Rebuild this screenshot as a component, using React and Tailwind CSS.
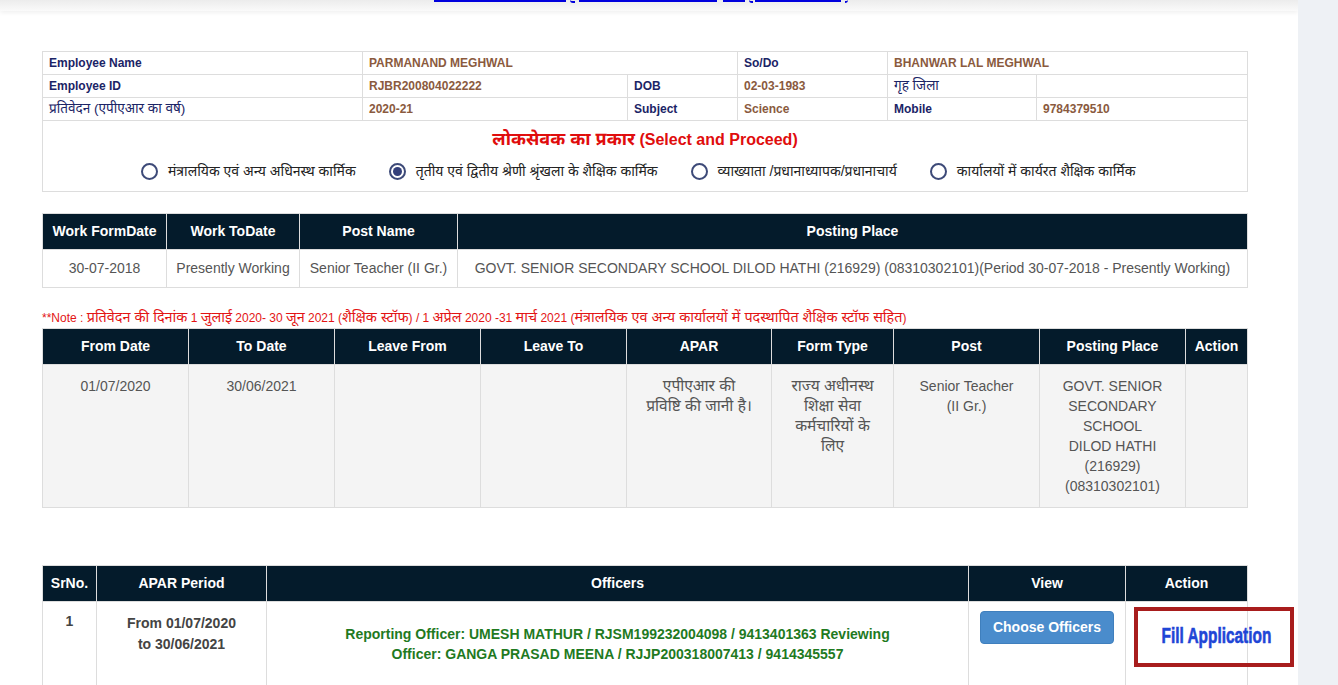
import React, { useState } from "react";

const FONT = { fontFamily: '"Liberation Sans", Arial, "Noto Sans Devanagari", "Lohit Devanagari", "Noto Sans", sans-serif' };

// devanagari fallback runs a bit small, bump it
const Hi = ({ children, big }) => <span className={big ? "text-[1.2em]" : "text-[1.13em]"}>{children}</span>;

const Label = ({ children, className = "" }) => (
  <td className={`border border-[#dddddd] px-[6px] h-[23px] text-[12px] font-bold text-[#1b2466] ${className}`}>{children}</td>
);
const Value = ({ children, colSpan, className = "" }) => (
  <td colSpan={colSpan} className={`border border-[#dddddd] px-[6px] h-[23px] text-[12px] font-bold text-[#8a5a3e] ${className}`}>{children}</td>
);

const Th = ({ children, w }) => (
  <th className={`${w} h-[36px] border-x border-[#dddddd] bg-[#041b2b] text-white text-[14px] font-bold text-center align-middle`}>
    {children}
  </th>
);

const Radio = ({ checked, label, onClick }) => (
  <label className="flex items-center gap-[10px] cursor-pointer" onClick={onClick}>
    <span className="w-[17px] h-[17px] rounded-full border-2 border-[#3d4a78] flex items-center justify-center bg-white">
      {checked ? <span className="w-[9px] h-[9px] rounded-full bg-[#34407a]" /> : null}
    </span>
    <span className="text-[14px] text-[#222]">{label}</span>
  </label>
);

export default function App() {
  const [kind, setKind] = useState(1);
  const kinds = [
    "मंत्रालयिक एवं अन्य अधिनस्थ कार्मिक",
    "तृतीय एवं द्वितीय श्रेणी श्रृंखला के शैक्षिक कार्मिक",
    "व्याख्याता /प्रधानाध्यापक/प्रधानाचार्य",
    "कार्यालयों में कार्यरत शैक्षिक कार्मिक",
  ];

  return (
    <div className="flex w-[1338px] h-[685px] overflow-hidden bg-white" style={FONT}>
      <div className="w-[1298px] shrink-0">
        {/* top strip, link mostly scrolled out */}
        <div className="h-[11px] bg-gradient-to-b from-[#ececec] to-[#fafafa] shadow-[0_2px_4px_rgba(0,0,0,0.06)]">
          <div className="flex items-start ml-[434px] h-[4px] overflow-hidden">
            <span className="w-[132px] h-[2px] bg-[#0000dd]" />
            <span className="ml-[4px] w-[5px] h-[3px] border-b-2 border-[#0000dd] rounded-bl-full" />
            <span className="ml-[4px] w-[138px] h-[2px] bg-[#0000dd]" />
            <span className="ml-[6px] w-[22px] h-[2px] bg-[#0000dd]" />
            <span className="ml-[4px] w-[4px] h-[3px] border-b-2 border-[#0000dd] rounded-bl-full" />
            <span className="ml-[2px] w-[86px] h-[2px] bg-[#0000dd]" />
            <span className="ml-[4px] w-[3px] h-[3px] border-b-2 border-[#0000dd] rounded-br-full" />
          </div>
        </div>

        <div className="pl-[42px] pt-[40px] w-[1247px]">
          {/* employee details */}
          <table className="w-[1205px] border-collapse table-fixed">
            <colgroup>
              <col className="w-[320px]" />
              <col className="w-[265px]" />
              <col className="w-[110px]" />
              <col className="w-[150px]" />
              <col className="w-[149px]" />
              <col className="w-[211px]" />
            </colgroup>
            <tbody>
              <tr>
                <Label>Employee Name</Label>
                <Value colSpan={2}>PARMANAND MEGHWAL</Value>
                <Label>So/Do</Label>
                <Value colSpan={2}>BHANWAR LAL MEGHWAL</Value>
              </tr>
              <tr>
                <Label>Employee ID</Label>
                <Value>RJBR200804022222</Value>
                <Label>DOB</Label>
                <Value>02-03-1983</Value>
                <Label className="!font-normal"><Hi>गृह जिला</Hi></Label>
                <Value></Value>
              </tr>
              <tr>
                <Label className="!font-normal"><Hi>प्रतिवेदन (एपीएआर का वर्ष)</Hi></Label>
                <Value>2020-21</Value>
                <Label>Subject</Label>
                <Value>Science</Value>
                <Label>Mobile</Label>
                <Value>9784379510</Value>
              </tr>
              <tr>
                <td colSpan={6} className="border border-[#dddddd] h-[71px] align-top">
                  <div className="text-center text-[#e00d0d] text-[16px] font-bold pt-[7px] leading-[22px]">
                    <Hi>लोकसेवक का प्रकार</Hi> (Select and Proceed)
                  </div>
                  <div className="flex gap-[33px] mt-[10px] pl-[98px]">
                    {kinds.map((k, i) => (
                      <Radio key={i} checked={kind === i} label={k} onClick={() => setKind(i)} />
                    ))}
                  </div>
                </td>
              </tr>
            </tbody>
          </table>

          {/* work history */}
          <table className="w-[1205px] border-collapse table-fixed mt-[21px] border border-[#dddddd]">
            <thead>
              <tr>
                <Th w="w-[124px]">Work FormDate</Th>
                <Th w="w-[133px]">Work ToDate</Th>
                <Th w="w-[158px]">Post Name</Th>
                <Th w="w-[790px]">Posting Place</Th>
              </tr>
            </thead>
            <tbody>
              <tr className="text-[14px] text-[#555] text-center">
                <td className="border border-[#dddddd] h-[38px]">30-07-2018</td>
                <td className="border border-[#dddddd]">Presently Working</td>
                <td className="border border-[#dddddd]">Senior Teacher (II Gr.)</td>
                <td className="border border-[#dddddd]">
                  GOVT. SENIOR SECONDARY SCHOOL DILOD HATHI (216929) (08310302101)(Period 30-07-2018 - Presently Working)
                </td>
              </tr>
            </tbody>
          </table>

          <p className="mt-[20px] text-[12px] leading-[18px] text-[#e31414] whitespace-nowrap">
            **Note : <Hi big>प्रतिवेदन की दिनांक</Hi> 1 <Hi big>जुलाई</Hi> 2020- 30 <Hi big>जून</Hi> 2021 (<Hi big>शैक्षिक स्टॉफ</Hi>) / 1 <Hi big>अप्रेल</Hi> 2020 -31 <Hi big>मार्च</Hi> 2021 (<Hi big>मंत्रालयिक एव अन्य कार्यालयों में पदस्थापित शैक्षिक स्टॉफ सहित</Hi>)
          </p>

          {/* apar table */}
          <table className="w-[1205px] border-collapse table-fixed mt-[1px] border border-[#dddddd]">
            <thead>
              <tr>
                <Th w="w-[146px]">From Date</Th>
                <Th w="w-[146px]">To Date</Th>
                <Th w="w-[146px]">Leave From</Th>
                <Th w="w-[146px]">Leave To</Th>
                <Th w="w-[145px]">APAR</Th>
                <Th w="w-[122px]">Form Type</Th>
                <Th w="w-[146px]">Post</Th>
                <Th w="w-[146px]">Posting Place</Th>
                <Th w="w-[62px]">Action</Th>
              </tr>
            </thead>
            <tbody>
              <tr className="bg-[#f4f4f4] text-[14px] leading-[20px] text-[#555] text-center align-top">
                <td className="border border-[#dddddd] h-[143px] pt-[11px]">01/07/2020</td>
                <td className="border border-[#dddddd] pt-[11px]">30/06/2021</td>
                <td className="border border-[#dddddd]"></td>
                <td className="border border-[#dddddd]"></td>
                <td className="border border-[#dddddd] pt-[11px] text-[15.5px]">
                  एपीएआर की<br />प्रविष्टि की जानी है।
                </td>
                <td className="border border-[#dddddd] pt-[11px] text-[15.5px]">
                  राज्य अधीनस्थ<br />शिक्षा सेवा<br />कर्मचारियों के<br />लिए
                </td>
                <td className="border border-[#dddddd] pt-[11px]">Senior Teacher<br />(II Gr.)</td>
                <td className="border border-[#dddddd] pt-[11px] px-[6px]">
                  GOVT. SENIOR SECONDARY SCHOOL<br />DILOD HATHI (216929) (08310302101)
                </td>
                <td className="border border-[#dddddd]"></td>
              </tr>
            </tbody>
          </table>

          {/* officers */}
          <div className="relative mt-[57px]">
            <table className="w-[1205px] border-collapse table-fixed border border-[#dddddd]">
              <thead>
                <tr>
                  <Th w="w-[54px]">SrNo.</Th>
                  <Th w="w-[170px]">APAR Period</Th>
                  <Th w="w-[702px]">Officers</Th>
                  <Th w="w-[157px]">View</Th>
                  <Th w="w-[122px]">Action</Th>
                </tr>
              </thead>
              <tbody>
                <tr className="text-[14px] leading-[21px] text-center align-top">
                  <td className="border border-[#dddddd] h-[100px] pt-[9px] font-bold text-[#444]">1</td>
                  <td className="border border-[#dddddd] pt-[11px] font-bold text-[#444]">
                    From 01/07/2020<br />to 30/06/2021
                  </td>
                  <td className="border border-[#dddddd] pt-[22px] px-[70px] font-bold text-[#1f7a1f] leading-[20px]">
                    Reporting Officer: UMESH MATHUR / RJSM199232004098 / 9413401363 Reviewing Officer: GANGA PRASAD MEENA / RJJP200318007413 / 9414345557
                  </td>
                  <td className="border border-[#dddddd] pt-[9px]">
                    <button className="w-[134px] h-[33px] rounded-[4px] bg-[#4a8ccc] border border-[#3f7fbd] text-white font-bold text-[14px]">
                      Choose Officers
                    </button>
                  </td>
                  <td className="border border-[#dddddd]"></td>
                </tr>
              </tbody>
            </table>
            <div className="absolute left-[1092px] top-[42px] w-[160px] h-[60px] border-[4px] border-[#a81d1d] flex items-center justify-center pb-[3px] pl-[4px]">
              <span
                className="inline-block text-[#1f45d6] text-[22px] font-bold scale-x-[0.7] whitespace-nowrap [-webkit-text-stroke:0.6px_#1f45d6]"
                style={{ fontFamily: '"Liberation Sans Narrow", "Liberation Sans", Arial, sans-serif' }}
              >
                Fill Application
              </span>
            </div>
          </div>
        </div>
      </div>
      <div className="flex-1 bg-[#eef1f5]" />
    </div>
  );
}
